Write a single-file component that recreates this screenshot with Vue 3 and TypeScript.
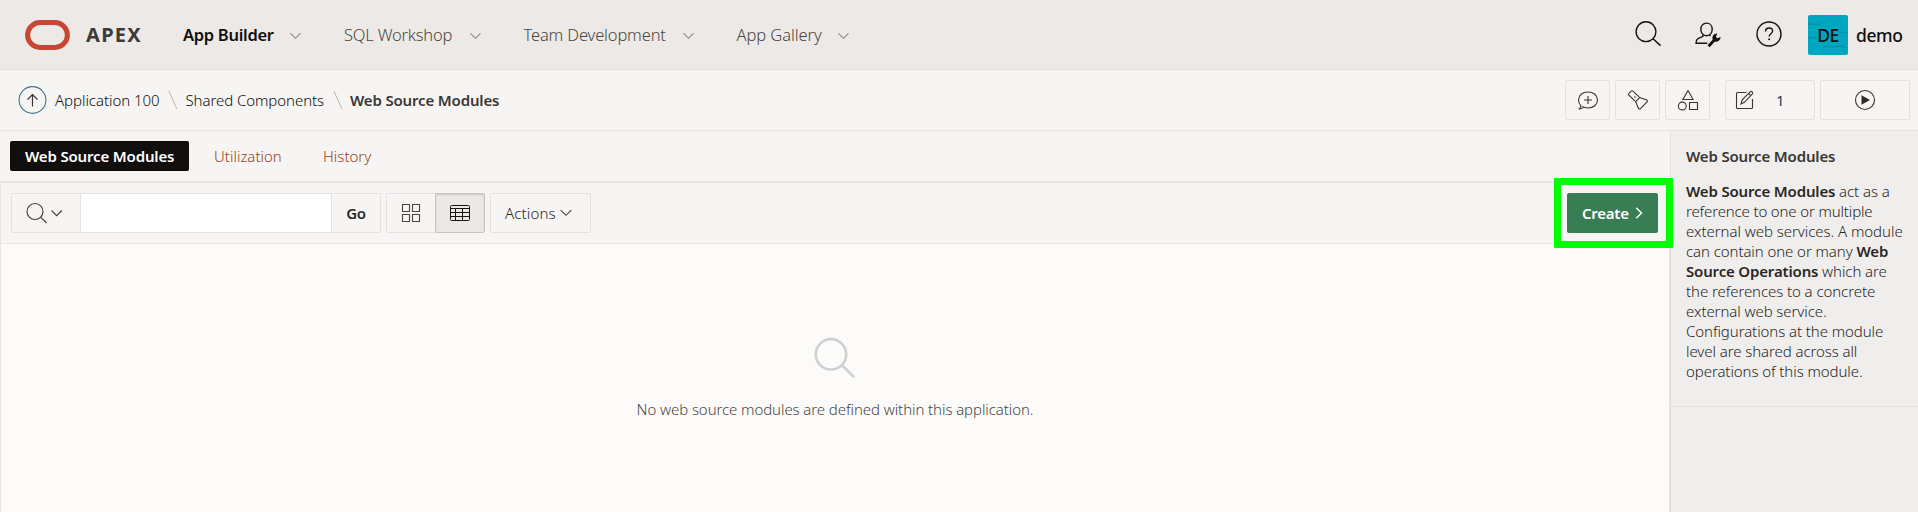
<script setup lang="ts">
interface NavItem { label: string; cls: string }

const nav: NavItem[] = [
  { label: 'App Builder', cls: 'builder' },
  { label: 'SQL Workshop', cls: 'sql' },
  { label: 'Team Development', cls: 'team' },
  { label: 'App Gallery', cls: 'gallery' },
]
</script>

<template>
  <div class="page">
    <header class="header">
      <svg class="logo" width="45" height="30" viewBox="0 0 45 30">
        <rect x="2.6" y="2.5" width="39.8" height="25" rx="12.5" fill="none" stroke="#c74634" stroke-width="5" />
      </svg>
      <span class="brand">APEX</span>
      <nav class="nav">
        <a v-for="item in nav" :key="item.label" class="nav-item" :class="item.cls">
          <span>{{ item.label }}</span>
          <svg width="12" height="8" viewBox="0 0 12 8"><path d="M.5 1.3 5.500 6.3 10.500 1.3" fill="none" stroke="#8b8580" stroke-width="1.1" /></svg>
        </a>
      </nav>
      <div class="tools">
        <svg class="t-search" width="28" height="28" viewBox="0 0 28 28" fill="none" stroke="#161513">
          <circle cx="12" cy="11.7" r="9.9" stroke-width="1.4" /><path d="M19 18.8 26.6 25.6" stroke-width="1.5" />
        </svg>
        <svg class="t-admin" width="28" height="28" viewBox="0 0 28 28" fill="none" stroke="#161513" stroke-width="1.4">
          <path d="M12.5 2.1c3.4 0 5.7 2.7 5.7 6.1 0 3.7-2.5 6.6-5.7 6.6s-5.7-2.9-5.7-6.6c0-3.4 2.3-6.1 5.7-6.1Z" />
          <path d="M8.9 13.5v1.9l-4.8 2.3c-1.5.8-2 2-2 3.800v.8h11.200M16 13.500v1.700" />
          <path d="M14.600 25.200 21 18.200" stroke-width="2.900" />
          <path d="M23.300 12.500 21.900 15.800 23.300 17.300 26.600 15.900A4.500 4.500 0 0 1 20.600 20.400L18.500 18.200A4.500 4.500 0 0 1 23.300 12.500Z" fill="#161513" stroke="none" />
        </svg>
        <svg class="t-help" width="28" height="28" viewBox="0 0 28 28" fill="none" stroke="#161513">
          <circle cx="14" cy="14" r="12" stroke-width="1.4" />
          <path d="M10.5 11.5c0-2.2 1.5-3.5 3.6-3.5s3.5 1.3 3.5 3.1c0 2.600-3.500 2.600-3.500 5.400" stroke-width="1.400" />
          <circle cx="14.100" cy="19.200" r="1" fill="#161513" stroke="none" />
        </svg>
        <div class="avatar">
          <svg class="avatar-art" width="40" height="40" viewBox="0 0 40 40" fill="none" stroke="#0094ac" stroke-width="1.500">
            <path d="M0 8.500q7 2 12 0M0 22q4 1.500 8 .5M31 18q5-1.500 9 0M14 30q7 3 14 1.500t10 1.500" />
          </svg>
          <span>DE</span>
        </div>
        <span class="user">demo</span>
      </div>
    </header>

    <div class="crumbs">
      <svg class="up" width="30" height="30" viewBox="0 0 30 30" fill="none">
        <circle cx="15.500" cy="15" r="13.400" stroke="#3d7686" stroke-width="1.100" />
        <path d="M15.500 21.500V10M10.500 14.500l5-5 5 5" stroke="#3a3734" stroke-width="1.200" />
      </svg>
      <span class="c1">Application 100</span>
      <svg class="sep" width="10" height="20" viewBox="0 0 10 20"><path d="M.9 1 8.900 19" stroke="#b9b4b0" /></svg>
      <span class="c2">Shared Components</span>
      <svg class="sep" width="10" height="20" viewBox="0 0 10 20"><path d="M.9 1 8.900 19" stroke="#b9b4b0" /></svg>
      <strong class="wsm">Web Source Modules</strong>
      <div class="crumb-buttons">
        <span class="btn sq">
          <svg width="24" height="24" viewBox="0 0 24 24" fill="none" stroke="#3a3632" stroke-width="1.100">
            <path d="M6 18.600c1.800.9 3.800 1.400 6 1.400 5.600 0 9.500-3.300 9.500-8s-3.900-8-9.500-8-9.500 3.300-9.500 8c0 2.300.9 4.200 2.400 5.600-.1 1.600-.9 2.900-2.100 3.700 1.600-.2 3.700-1.100 4.900-2.200M12 8v8M8 12h8" />
          </svg>
        </span>
        <span class="btn sq">
          <svg width="24" height="24" viewBox="0 0 24 24" fill="none" stroke="#3a3632" stroke-width="1.100">
            <path d="M2.700 5.700 5.400 2.900Q6.200 2.400 7 3.200L13.700 9.600 20.700 12 21.500 13.500 14 21.200 12.500 20.500 9.700 13.700 2.800 7Q2.100 6.400 2.700 5.700ZM13.700 9.600 9.700 13.700M8.500 8.500l1 1" />
          </svg>
        </span>
        <span class="btn sq">
          <svg width="24" height="24" viewBox="0 0 24 24" fill="none" stroke="#3a3632" stroke-width="1.100">
            <path d="M12 2.500 6.900 11.500H17.100ZM13.500 14.500h8v7h-8Z" /><circle cx="6.300" cy="18" r="3.900" />
          </svg>
        </span>
        <span class="btn edit">
          <svg width="20" height="20" viewBox="0 0 20 20" fill="none" stroke="#3a3632" stroke-width="1.100">
            <path d="M11.500 2.500H2.500q-1 0-1 1v14q0 1 1 1h14q1 0 1-1V9M6 14l1.200-4.200 8-8q1-.8 2.100.2.900 1.100.1 2l-8 8.300ZM13.500 3.500l2.500 2.400" />
          </svg>
          <span class="count">1</span>
        </span>
        <span class="btn play">
          <svg width="22" height="22" viewBox="0 0 22 22">
            <circle cx="11" cy="11" r="9.500" fill="none" stroke="#3a3632" stroke-width="1.100" /><path d="M7.500 6.200 16 11 7.500 15.800Z" fill="#2f2c29" />
          </svg>
        </span>
      </div>
    </div>

    <div class="body">
      <main class="main">
        <div class="tabs">
          <span class="tab active"><span class="wsm">Web Source Modules</span></span>
          <span class="tab util">Utilization</span>
          <span class="tab">History</span>
        </div>
        <section class="report">
          <div class="toolbar">
            <div class="search">
              <span class="search-menu">
                <svg width="38" height="22" viewBox="0 0 38 22" fill="none" stroke="#3f3b38" stroke-width="1.100">
                  <circle cx="9" cy="9.500" r="8" /><path d="M14.700 15.200 20.500 21M25.500 8.500l5.200 5.200L35.900 8.500" />
                </svg>
              </span>
              <input class="field" type="text" />
              <span class="go">Go</span>
            </div>
            <div class="views">
              <span class="view">
                <svg width="20" height="20" viewBox="0 0 20 20" fill="none" stroke="#4a4642" stroke-width="1.100">
                  <path d="M1.500 1.500h7v7h-7ZM11.500 1.500h7v7h-7ZM1.500 11.500h7v7h-7ZM11.500 11.500h7v7h-7Z" />
                </svg>
              </span>
              <span class="view on">
                <svg width="20" height="16" viewBox="0 0 20 16" fill="none" stroke="#161513" stroke-width="1">
                  <path d="M.5 1.500q0-1 1-1h17q1 0 1 1v13q0 1-1 1h-17q-1 0-1-1ZM.5 3.500h19M.5 7.500h19M.5 11.500h19M5.500 3.500v12M12.500 3.500v12" />
                </svg>
              </span>
            </div>
            <span class="actions"><span>Actions</span>
              <svg width="12" height="8" viewBox="0 0 12 8"><path d="M.7 1.200 6 6.300 11.300 1.200" fill="none" stroke="#4a4642" stroke-width="1.100" /></svg>
            </span>
            <div class="highlight">
              <button class="create" type="button"><span>Create</span>
                <svg width="8" height="12" viewBox="0 0 8 12"><path d="M1.200.8 6.500 6 1.200 11.200" fill="none" stroke="#fff" stroke-width="1.400" /></svg>
              </button>
            </div>
          </div>
          <div class="empty">
            <svg width="42" height="42" viewBox="0 0 42 42" fill="none" stroke="#d0d0cf" stroke-width="2.600" stroke-linecap="round">
              <circle cx="17" cy="17.300" r="15.200" /><path d="M28.300 28.500 39.500 39.700" />
            </svg>
            <p>No web source modules are defined within this application.</p>
          </div>
        </section>
      </main>

      <aside class="side">
        <div class="help">
          <h2><span class="wsm">Web Source Modules</span></h2>
          <p>
            <span><b class="wsm">Web Source Modules</b> act as a</span>
            <span class="l2">reference to one or multiple</span>
            <span class="l3">external web services. A module</span>
            <span>can contain one or many <b>Web</b></span>
            <span><b>Source Operations</b> which are</span>
            <span>the references to a concrete</span>
            <span>external web service.</span>
            <span>Configurations at the module</span>
            <span>level are shared across all</span>
            <span>operations of this module.</span>
          </p>
        </div>
      </aside>
    </div>
  </div>
</template>

<style>
body { background: #fcfbfa; }
</style>

<style scoped>
* { box-sizing: border-box; }
.page {
  display: flex; flex-direction: column; width: 100%; height: 512px; overflow: hidden;
  font: 300 15px/20px "Noto Sans", "Open Sans", sans-serif; color: #2a2724; white-space: nowrap;
}
svg { display: block; flex: none; }

.header { display: flex; align-items: center; height: 70px; flex: none; padding-left: 25px; background: #ede9e6; border-bottom: 1px solid #e2e1df; }
.brand { width: 97px; margin-left: 16px; font-size: 20px; font-weight: 700; letter-spacing: 1.3px; color: #3d3a37; }
.nav { display: flex; }
.nav-item { display: flex; align-items: center; margin-right: 42px; font-size: 16.5px; color: #4b4641; }
.nav-item span { flex: none; }
.nav-item svg { margin-left: 17px; margin-top: 3px; }
.builder { font-weight: 600; color: #100f0e; letter-spacing: -.3px; }
.builder span { width: 90px; }
.sql { letter-spacing: -.2px; }
.sql span { width: 108.5px; }
.team { letter-spacing: -.15px; }
.team span { width: 142px; }
.gallery { letter-spacing: -.08px; }
.gallery span { width: 84.5px; }
.tools { display: flex; align-items: center; width: 284px; margin-left: auto; }
.t-search { margin-top: -1px; }
.t-admin { margin-left: 32px; }
.t-help { margin-left: 32.5px; margin-top: -1px; }
.avatar { position: relative; display: flex; align-items: center; justify-content: center; width: 40px; height: 40px; margin-left: 25.5px; margin-top: 1px; border-radius: 2px; background: #00a5bf; color: #100f0e; font-size: 17.5px; font-weight: 500; }
.avatar-art { position: absolute; left: 0; top: 0; }
.avatar span { position: relative; letter-spacing: -.5px; }
.user { margin-left: 8px; font-size: 17.5px; font-weight: 500; letter-spacing: -.4px; color: #100f0e; }

.crumbs { display: flex; align-items: center; height: 61px; flex: none; padding: 0 8px 0 17px; background: #f6f5f4; border-bottom: 1px solid #e5e4e2; color: #100f0e; }
.up { margin-top: -1px; }
.c1 { width: 104.5px; margin-left: 8px; letter-spacing: -.05px; }
.sep { margin: 0 7.5px 0 8.5px; }
.c2 { width: 138.5px; letter-spacing: -.07px; }
.wsm { font-weight: 600; letter-spacing: -.16px; }
strong { color: #3a3632; }
.crumb-buttons { display: flex; gap: 5px; margin-left: auto; }
.btn { display: flex; align-items: center; justify-content: center; height: 40px; border: 1px solid #e4e2e0; border-radius: 2px; }
.sq { width: 45px; }
.edit { width: 90px; margin-left: 10px; justify-content: flex-start; padding-left: 9px; }
.count { margin-left: 21px; color: #1c3d52; font-weight: 400; }
.play { width: 90px; }

.body { display: flex; flex: 1; min-height: 0; }
.main { display: flex; flex-direction: column; flex: 1; min-width: 0; }
.tabs { display: flex; align-items: center; height: 50px; flex: none; padding-left: 10px; background: #f6f5f4; }
.tab { display: flex; align-items: center; height: 30px; margin-left: 40px; color: #9c4119; }
.tab.active { width: 179px; margin: 0 -15px 0 0; padding-left: 15px; border-radius: 2px; background: #100f0e; color: #fff; }
.util { width: 69px; }
.report { display: flex; flex-direction: column; flex: 1; border: solid #e5e4e2; border-width: 2px 1px 0 1px; background: #fcfbfa; }
.toolbar { display: flex; align-items: center; height: 61px; flex: none; padding-left: 10px; background: #f6f5f4; border-bottom: 1px solid #e5e4e2; }
.search { display: flex; width: 370px; height: 40px; border: 1px solid #e4e2e0; border-radius: 2px; }
.search-menu { display: flex; align-items: center; width: 69px; padding-left: 14px; border-right: 1px solid #e4e2e0; }
.field { width: 250px; height: 38px; padding: 0 8px; border: 0; background: #fff; font: inherit; }
.go { display: flex; align-items: center; justify-content: center; flex: 1; border-left: 1px solid #e4e2e0; font-weight: 600; letter-spacing: -.4px; }
.views { display: flex; width: 99px; height: 40px; margin-left: 5px; }
.view { display: flex; align-items: center; justify-content: center; width: 49px; border: 1px solid #e4e2e0; border-right: 0; border-radius: 2px 0 0 2px; }
.view.on { width: 50px; border: 1px solid #c8c5c3; border-radius: 0 2px 2px 0; background: #ece8e5; box-shadow: inset 0 1px 2px rgba(0, 0, 0, .15); }
.actions { display: flex; align-items: center; width: 101px; height: 40px; margin-left: 5px; padding-left: 14px; border: 1px solid #e4e2e0; border-radius: 2px; }
.actions span { width: 55px; letter-spacing: .15px; }
.highlight { display: flex; flex: none; width: 119px; height: 70px; margin: -4px -4px -4px auto; padding: 8px 6px; border: 7px solid #0f0; border-radius: 1px; position: relative; }
.create { display: flex; align-items: center; width: 91px; height: 40px; padding: 0 0 0 15px; border: 0; border-radius: 2px; background: #397d55; color: #fff; font: 600 15px/20px "Noto Sans", "Open Sans", sans-serif; letter-spacing: -.25px; }
.create span { width: 53px; text-align: left; }
.empty { display: flex; flex-direction: column; align-items: center; padding-top: 93px; }
.empty p { margin: 20px 0 0; letter-spacing: -.08px; color: #4a4642; }

.side { width: 248px; flex: none; border-left: 1px solid #e2e1df; background: #f0eeed; }
.help { height: 276px; padding: 15px 0 0 15px; border-bottom: 1px solid #e4e2e0; }
h2 { margin: 0; font-size: 15px; line-height: 20px; color: #3a3632; }
.help p { margin: 15px 0 0; letter-spacing: -.08px; }
.help p > span { display: block; }
.help b { font-weight: 600; letter-spacing: -.16px; }
.help .l2 { letter-spacing: -.15px; }
.help .l3 { letter-spacing: -.05px; }
</style>
